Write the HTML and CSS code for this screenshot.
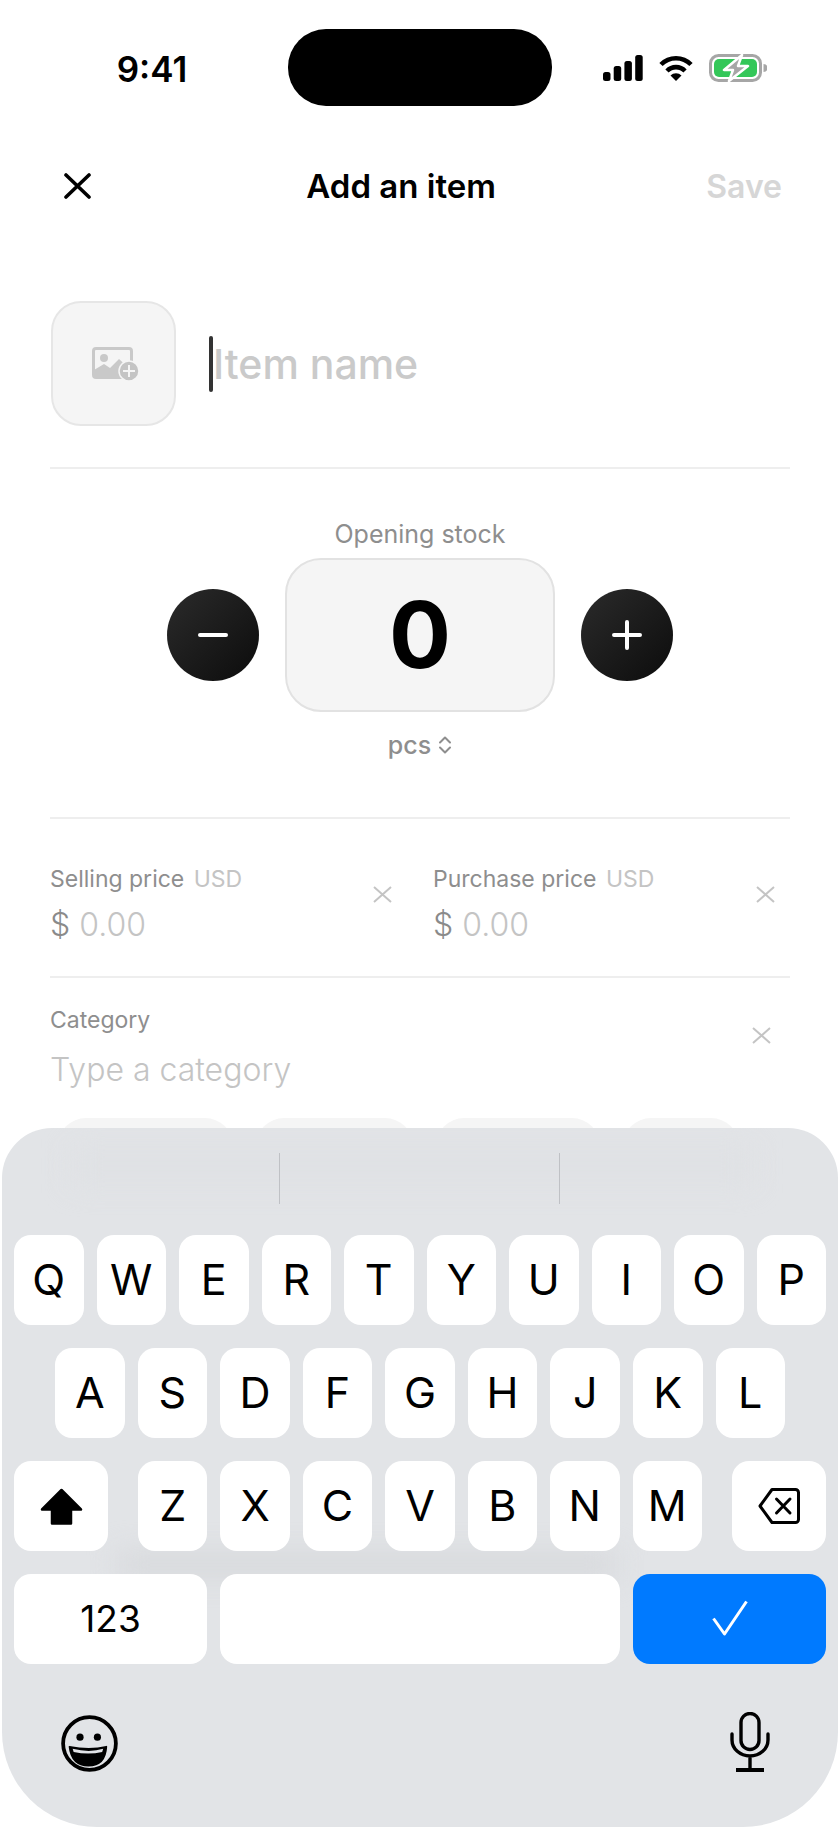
FILE: index.html
```html
<!DOCTYPE html>
<html lang="en">
<head>
    <meta charset="UTF-8">
    <meta name="viewport" content="width=device-width, initial-scale=1.0">
    <title>Add an item</title>
    <link rel="stylesheet" href="styles.css">
</head>
<body>
<div class="screen">
    <div class="statusBar">
        <div class="time">9:41</div>
        <div class="island"></div>
        <div class="statusIcons">
            <svg width="40" height="26" viewBox="0 0 40 26"><rect x="0" y="17" width="7.5" height="9" rx="2.5"/><rect x="10.7" y="11" width="7.5" height="15" rx="2.5"/><rect x="21.4" y="6" width="7.5" height="20" rx="2.5"/><rect x="32.2" y="0" width="7.5" height="26" rx="2.5"/></svg>
            <svg width="34" height="26" viewBox="0 0 34 26"><path d="M2 9.5A21 21 0 0 1 32 9.5M8 16A12.5 12.5 0 0 1 26 16" fill="none" stroke="#000" stroke-width="4.6"/><path d="M11.5 20.5A7.6 7.6 0 0 1 22.5 20.5L17 26Z"/></svg>
            <svg width="58" height="28" viewBox="0 0 58 28"><rect x="1.5" y="1.5" width="50" height="25" rx="8" fill="#fff" stroke="#a6a6a6" stroke-width="3"/><rect x="5" y="5" width="43" height="18" rx="5" fill="#34c759"/><path d="M54.5 10a4 4 0 0 1 0 8z" fill="#a6a6a6"/><path d="M33 1L15 16H24L20 27L39 12H29Z" fill="#a6a6a6" stroke="#fff" stroke-width="2.5" stroke-linejoin="round"/></svg>
        </div>
    </div>

    <div class="navBar">
        <svg class="closeIcon" width="27" height="26" viewBox="0 0 27 26"><path d="M2 2L25 24M25 2L2 24" fill="none" stroke="#000" stroke-width="3.6" stroke-linecap="round"/></svg>
        <div class="navTitle">Add an item</div>
        <div class="navSave">Save</div>
    </div>

    <div class="form">
        <div class="itemRow">
            <div class="photoBox">
                <svg class="photoIcon" width="48" height="36" viewBox="0 0 48 36"><rect x="1.5" y="2.5" width="38" height="29" rx="2.5" fill="none" stroke="#c9c9c9" stroke-width="3"/><circle cx="12" cy="12" r="4" fill="#c9c9c9"/><path d="M2 32V24L12 18L18 22L27 13L39 24V32Z" fill="#c9c9c9"/><circle cx="37" cy="25" r="10" fill="#c4c4c4" stroke="#f5f5f5" stroke-width="1.5"/><path d="M37 19V31M31 25H43" stroke="#f5f5f5" stroke-width="2"/></svg>
            </div>
            <div class="caret"></div>
            <div class="itemName">Item name</div>
        </div>

        <div class="stock">
            <div class="stockLabel">Opening stock</div>
            <div class="stepper">
                <div class="stepButton">
                    <svg width="32" height="32" viewBox="0 0 32 32"><path d="M3 16H29" stroke="#fff" stroke-width="4" stroke-linecap="round"/></svg>
                </div>
                <div class="stockValue">0</div>
                <div class="stepButton">
                    <svg width="32" height="32" viewBox="0 0 32 32"><path d="M3 16H29M16 3V29" stroke="#fff" stroke-width="4" stroke-linecap="round"/></svg>
                </div>
            </div>
            <div class="unit">pcs
                <svg width="14" height="18" viewBox="0 0 14 18"><path d="M2 6.5L7 1.5L12 6.5M2 11.5L7 16.5L12 11.5" fill="none" stroke="#8e8e8e" stroke-width="2" stroke-linecap="round" stroke-linejoin="round"/></svg>
            </div>
        </div>

        <div class="prices">
            <div class="priceField">
                <div>
                    <div class="fieldLabel">Selling price <span class="currency">USD</span></div>
                    <div class="fieldValue"><span class="dollar">$</span> 0.00</div>
                </div>
                <svg class="clearIcon" width="19" height="17" viewBox="0 0 19 17"><path d="M1 1L18 16M18 1L1 16" fill="none" stroke="#c4c4c4" stroke-width="2"/></svg>
            </div>
            <div class="priceField">
                <div>
                    <div class="fieldLabel">Purchase price <span class="currency">USD</span></div>
                    <div class="fieldValue"><span class="dollar">$</span> 0.00</div>
                </div>
                <svg class="clearIcon" width="19" height="17" viewBox="0 0 19 17"><path d="M1 1L18 16M18 1L1 16" fill="none" stroke="#c4c4c4" stroke-width="2"/></svg>
            </div>
        </div>

        <div class="category">
            <div class="categoryTop">
                <div>
                    <div class="fieldLabel">Category</div>
                    <div class="fieldValue categoryValue">Type a category</div>
                </div>
                <svg class="clearIcon" width="19" height="17" viewBox="0 0 19 17"><path d="M1 1L18 16M18 1L1 16" fill="none" stroke="#c4c4c4" stroke-width="2"/></svg>
            </div>
            <div class="chips">
                <div class="chip chipA"></div>
                <div class="chip chipB"></div>
                <div class="chip chipC"></div>
                <div class="chip chipD"></div>
            </div>
        </div>
    </div>

    <div class="keyboard">
        <div class="haze hazeChips"></div>
        <div class="haze hazeRows"></div>

        <div class="suggestions">
            <div class="suggestion"></div>
            <div class="suggestion"></div>
            <div class="suggestion"></div>
        </div>

        <div class="keyRows">
            <div class="keyRow">
                <div class="key">Q</div><div class="key">W</div><div class="key">E</div><div class="key">R</div><div class="key">T</div><div class="key">Y</div><div class="key">U</div><div class="key">I</div><div class="key">O</div><div class="key">P</div>
            </div>
            <div class="keyRow rowMiddle">
                <div class="key">A</div><div class="key">S</div><div class="key">D</div><div class="key">F</div><div class="key">G</div><div class="key">H</div><div class="key">J</div><div class="key">K</div><div class="key">L</div>
            </div>
            <div class="keyRow rowShift">
                <div class="key keyAction">
                    <svg width="43" height="37" viewBox="0 0 43 37"><path d="M21.5 2L41 21.5H31V35.5H12V21.5H2Z" stroke="#000" stroke-width="2.5" stroke-linejoin="round"/></svg>
                </div>
                <div class="letters">
                    <div class="key">Z</div><div class="key">X</div><div class="key">C</div><div class="key">V</div><div class="key">B</div><div class="key">N</div><div class="key">M</div>
                </div>
                <div class="key keyAction">
                    <svg width="42" height="36" viewBox="0 0 42 36"><path d="M14 1.5H37.5A3 3 0 0 1 40.5 4.5V31.5A3 3 0 0 1 37.5 34.5H14L2 18Z" fill="none" stroke="#000" stroke-width="3" stroke-linejoin="round"/><path d="M18.5 11L32 25M32 11L18.5 25" fill="none" stroke="#000" stroke-width="3" stroke-linecap="round"/></svg>
                </div>
            </div>
            <div class="keyRow rowBottom">
                <div class="key keyWide">123</div>
                <div class="key keySpace"></div>
                <div class="key keyWide keyDone">
                    <svg width="36" height="36" viewBox="0 0 36 36"><path d="M1.5 18.5L12.5 34L34.5 1.5" fill="none" stroke="#fff" stroke-width="3" stroke-linejoin="round"/></svg>
                </div>
            </div>
        </div>

        <div class="keyboardFoot">
            <svg class="emojiIcon" width="57" height="57" viewBox="0 0 54 54"><circle cx="27" cy="27" r="25" fill="none" stroke="#000" stroke-width="3.6"/><circle cx="18" cy="21" r="3.4"/><circle cx="34.5" cy="21" r="3.4"/><path d="M8 30Q27 34 43 30Q42 48 26 48Q10 48 8 30Z" stroke="#000" stroke-width="1.5" stroke-linejoin="round"/><path d="M11 32Q27 36 40 32L39 35Q26 38 12 35Z" fill="#e1e3e7"/></svg>
            <svg width="40" height="60" viewBox="0 0 40 60"><rect x="11" y="1.5" width="18" height="36" rx="9" fill="none" stroke="#000" stroke-width="3.4"/><path d="M2 22V28A18 16 0 0 0 38 28V22M20 44V57" fill="none" stroke="#000" stroke-width="3.4" stroke-linecap="round"/><path d="M6 58H34" stroke="#000" stroke-width="4"/></svg>
        </div>
    </div>
</div>
</body>
</html>
```

FILE: styles.css
```css
* {
    box-sizing: border-box;
}
body {
    margin: 0;
    padding: 0;
    background-color: white;
    font-family: Inter, "Liberation Sans", sans-serif;
}
svg {
    display: block;
}
.screen {
    position: relative;
    width: 840px;
    height: 1827px;
    overflow: hidden;
}

/* status bar */
.statusBar {
    display: grid;
    grid-template-columns: 288px 264px 1fr;
    padding-top: 29px;
    height: 156px;
}
.time {
    height: 77px;
    line-height: 80px;
    padding-left: 16px;
    text-align: center;
    font-size: 35px;
    font-weight: 600;
    color: black;
}
.island {
    height: 77px;
    border-radius: 38px;
    background-color: black;
}
.statusIcons {
    display: flex;
    align-items: center;
    gap: 16px;
    height: 77px;
    padding-left: 51px;
}

/* nav */
.navBar {
    display: flex;
    justify-content: space-between;
    align-items: center;
    height: 60px;
    padding: 0 58px 0 64px;
}
.navTitle {
    margin-left: 5px;
    font-size: 33px;
    font-weight: 600;
    color: black;
}
.navSave {
    font-size: 32px;
    font-weight: 600;
    color: #d6d6d6;
}

/* form */
.form {
    padding: 0 50px;
}
.itemRow {
    display: flex;
    align-items: center;
    margin-top: 85px;
    padding-bottom: 41px;
    border-bottom: 2px solid #eeeeee;
}
.photoBox {
    display: flex;
    justify-content: center;
    align-items: center;
    width: 125px;
    height: 125px;
    margin-left: 1px;
    margin-right: 33px;
    background-color: #f5f5f5;
    border: 2px solid #e6e6e6;
    border-radius: 30px;
}
.photoIcon {
    margin-left: 5px;
}
.caret {
    width: 4px;
    height: 56px;
    border-radius: 2px;
    background-color: #333;
}
.itemName {
    font-size: 41px;
    font-weight: 500;
    color: #cacaca;
}

.stock {
    display: flex;
    flex-direction: column;
    align-items: center;
    padding-top: 50px;
    padding-bottom: 57px;
    border-bottom: 2px solid #eeeeee;
}
.stockLabel {
    height: 30px;
    line-height: 30px;
    font-size: 25px;
    color: #8e8e8e;
}
.stepper {
    display: flex;
    align-items: center;
    gap: 26px;
    margin-top: 9px;
}
.stepButton {
    display: flex;
    justify-content: center;
    align-items: center;
    width: 92px;
    height: 92px;
    border-radius: 50%;
    background: linear-gradient(135deg, #2b2b2b, #0c0c0c);
}
.stockValue {
    width: 270px;
    height: 154px;
    line-height: 150px;
    text-align: center;
    font-size: 92px;
    font-weight: 700;
    color: black;
    background-color: #f5f5f5;
    border: 2px solid #e2e2e2;
    border-radius: 36px;
}
.unit {
    display: flex;
    align-items: center;
    gap: 7px;
    height: 30px;
    margin-top: 18px;
    font-size: 25px;
    font-weight: 500;
    color: #8e8e8e;
}

.prices {
    display: grid;
    grid-template-columns: 342px 342px;
    gap: 41px;
    padding-top: 46px;
    padding-bottom: 31px;
    border-bottom: 2px solid #eeeeee;
}
.priceField,
.categoryTop {
    display: flex;
    justify-content: space-between;
    align-items: flex-start;
}
.clearIcon {
    margin-top: 21px;
}
.fieldLabel {
    height: 28px;
    line-height: 28px;
    font-size: 23px;
    color: #8e8e8e;
}
.currency {
    margin-left: 3px;
    color: #c4c4c4;
}
.fieldValue {
    height: 40px;
    line-height: 40px;
    margin-top: 12px;
    font-size: 32px;
    font-weight: 300;
    color: #c4c4c4;
}
.dollar {
    color: #8a8a8a;
}

.category {
    padding-top: 28px;
}
.categoryTop {
    padding-right: 19px;
}
.categoryValue {
    margin-top: 16px;
    font-size: 32px;
}
.chips {
    display: flex;
    gap: 23px;
    margin-top: 28px;
    padding-left: 8px;
}
.chip {
    height: 56px;
    border-radius: 28px;
    background-color: #f5f5f5;
}
.chipA {
    width: 175px;
}
.chipB {
    width: 157px;
}
.chipC {
    width: 164px;
}
.chipD {
    width: 116px;
}

/* keyboard, sits over the bottom of the form */
.keyboard {
    position: absolute;
    left: 2px;
    right: 2px;
    bottom: 0;
    height: 699px;
    overflow: hidden;
    background-color: #e2e4e7;
    border-radius: 50px 50px 95px 95px;
}
.haze {
    position: absolute;
    background-color: #d6d8db;
    filter: blur(14px);
}
.hazeChips {
    top: 20px;
    left: 70px;
    width: 680px;
    height: 36px;
    background-color: #dfe1e4;
}
.hazeRows {
    top: 425px;
    left: 115px;
    width: 500px;
    height: 24px;
}
.suggestions {
    position: relative;
    display: flex;
    height: 107px;
    padding-top: 25px;
    padding-left: 0;
}
.suggestion {
    width: 277px;
    height: 51px;
}
.suggestion:nth-child(2) {
    width: 281px;
    border-left: 1px solid #bfc1c5;
    border-right: 1px solid #bfc1c5;
}
.keyRows {
    position: relative;
    display: flex;
    flex-direction: column;
    gap: 23px;
    margin: 0 -2px;
}
.keyRow {
    display: flex;
    gap: 13px;
    padding: 0 14px;
}
.rowMiddle {
    padding: 0 55px;
}
.rowShift {
    justify-content: space-between;
    gap: 30px;
}
.letters {
    display: flex;
    flex: 1;
    gap: 13px;
}
.key {
    display: flex;
    flex: 1;
    justify-content: center;
    align-items: center;
    height: 90px;
    padding-bottom: 2px;
    font-size: 43px;
    color: black;
    background-color: white;
    border-radius: 17px;
}
.keyAction {
    flex: none;
    width: 94px;
    padding-bottom: 0;
}
.keyWide {
    flex: none;
    width: 193px;
    font-size: 37px;
}
.keySpace {
    flex: none;
    width: 400px;
}
.keyDone {
    background-color: #007aff;
}
.keyboardFoot {
    position: relative;
    display: flex;
    justify-content: space-between;
    align-items: flex-start;
    margin-top: 48px;
    padding: 0 68px 0 59px;
}
.emojiIcon {
    margin-top: 3px;
}
```
